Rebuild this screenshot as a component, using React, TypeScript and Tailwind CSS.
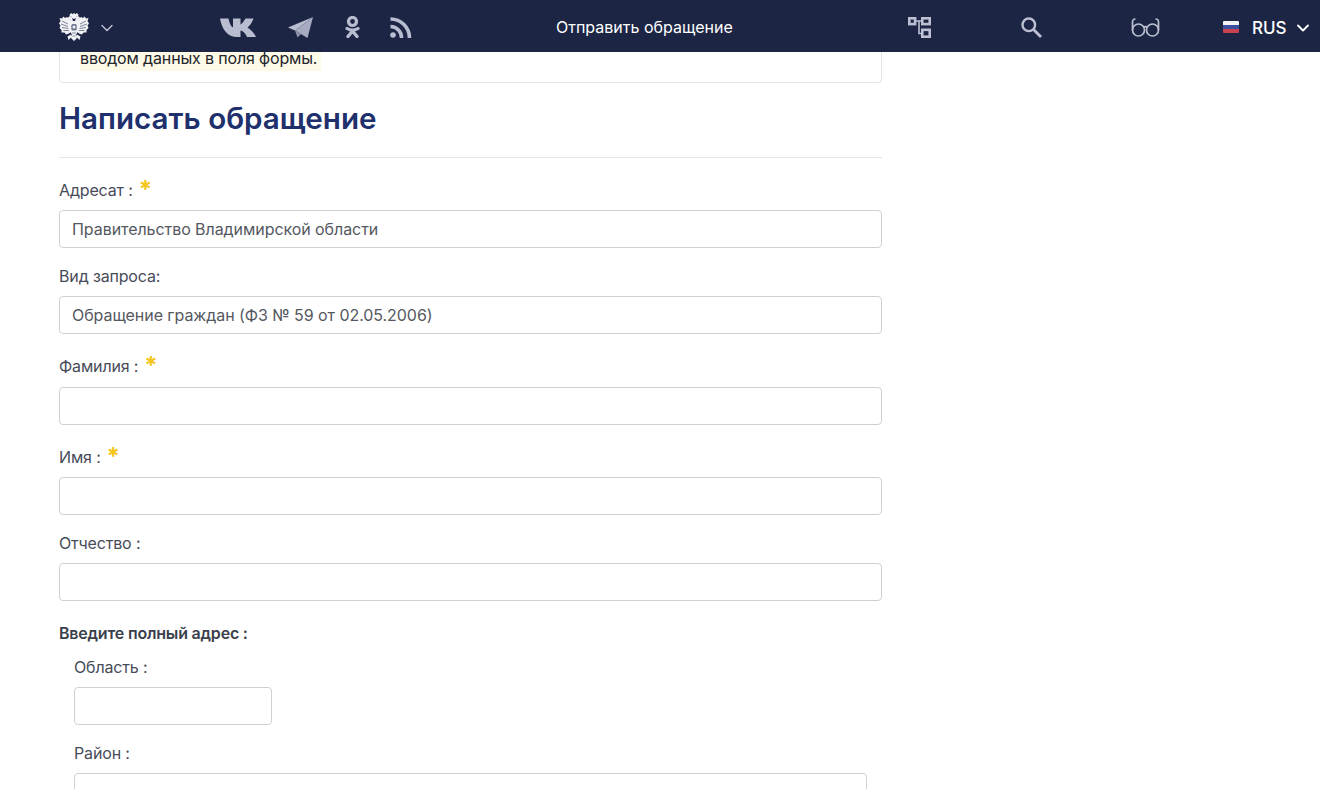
import React from 'react'
import { ChevronDown } from 'lucide-react'

const iconColor = '#b9bdd0'

const Wing = () => (
  <>
    <path d="M13 8 10.500 6 8 4 6 5 4.500 3.500 3 5.500 0.500 5 1.500 8 0 10.500 1.500 12.500 0.500 15 2.500 17 2.500 19.500 5.500 19.500 7 21.500 10 20.500 13 18z" />
    <path d="M3 8 9 11M2 11 9 13.500M3 14.500 9.500 15.500M4.500 17.500 10 17.500" stroke="#4c5370" strokeWidth="0.7" fill="none" />
    <path d="M12.500 3 10 3.500 9 5 7.500 5.500 9.500 6.500 11 6.500 13 9 14 8z" />
    <path d="M10.500 1.500 12.500 0 14 2 13.500 3.500 11 3.500z" />
    <path d="M8.500 23.500 12 21.500 13.500 24 11.500 25 9.500 27z" />
  </>
)

const Eagle = () => (
  <svg width="30" height="28" viewBox="0 0 30 28" fill="#f1f2f6">
    <Wing />
    <g transform="translate(30 0) scale(-1 1)">
      <Wing />
    </g>
    <path d="M13 1.500 15 0 17 1.500 17 5 15 6 13 5z" />
    <path d="M12 8h6l1 10-2 4 1 3-3 3-3-3 1-3-2-4z" />
    <rect x="12.300" y="11" width="5.400" height="6.500" rx="1.500" fill="#6f7690" />
    <circle cx="15" cy="14" r="1.500" fill="#f1f2f6" />
    <path d="M13 20h4M13.500 23h3" stroke="#5a6180" strokeWidth="0.7" />
  </svg>
)

const VkIcon = () => (
  <svg width="36" height="19" viewBox="0 0 36 19" fill={iconColor}>
    <path d="M0 0.500H8.500C9.500 5.500 11 8.500 13 9.500V0.500H20.500V6.500C22.500 5.500 24 3 25.500 0.500H33.500C32 5 29.500 8 27.500 9.500 30 11 33.500 14 36 19H27C25.500 15.500 23.500 13 20.500 12.500V19H17C8 19 2 12 0 0.500Z" />
  </svg>
)

const TelegramIcon = () => (
  <svg width="25" height="21" viewBox="0 0 25 21">
    <path d="M25 0 0 10.500 7 13.500z" fill={iconColor} />
    <path d="M25 0 7 13.500 19.500 21z" fill="#a6abc2" />
    <path d="M7 13.500 9.500 20.500 13 17z" fill="#8e94ae" />
  </svg>
)

const OkIcon = () => (
  <svg width="15" height="22" viewBox="0 0 15 22" fill="none" stroke={iconColor}>
    <circle cx="7.500" cy="5.500" r="4" strokeWidth="3.200" />
    <path d="M2 12.500c3.300 2 7.700 2 11 0" strokeWidth="3.200" strokeLinecap="round" />
    <path d="M7.500 15 3 20.500M7.500 15 12 20.500" strokeWidth="3.400" strokeLinecap="round" />
  </svg>
)

const RssIcon = () => (
  <svg width="22" height="21" viewBox="0 0 22 21" fill="none" stroke={iconColor} strokeWidth="3.600">
    <circle cx="3" cy="18" r="2.800" fill={iconColor} stroke="none" />
    <path d="M0.500 9.500A11 11 0 0 1 11.500 21" />
    <path d="M0.500 2A19 19 0 0 1 19.500 21" />
  </svg>
)

const SitemapIcon = () => (
  <svg width="23" height="21" viewBox="0 0 23 21" fill="none" stroke="#bcc0d2" strokeWidth="2.600">
    <rect x="1.300" y="1.300" width="5.800" height="5.800" />
    <rect x="14.300" y="1.300" width="7.400" height="5.800" />
    <rect x="14.300" y="12.800" width="7.400" height="6.900" />
    <path d="M7 4h8M11 4v12.500H15" strokeWidth="1.600" />
  </svg>
)

const SearchIcon = () => (
  <svg width="21" height="21" viewBox="0 0 21 21" fill="none" stroke="#bcc0d2">
    <circle cx="7.800" cy="7.800" r="6.300" strokeWidth="2.400" />
    <path d="M12.500 12.500 20 20" strokeWidth="2.800" />
  </svg>
)

const GlassesIcon = () => (
  <svg width="29" height="19" viewBox="0 0 29 19" fill="none" stroke="#bcc0d2" strokeWidth="1.700">
    <circle cx="7.500" cy="12" r="6" />
    <circle cx="21.500" cy="12" r="6" />
    <path d="M12.500 9.500c1.300-1 2.700-1 4 0" />
    <path d="M1.500 12V4c0-2 1-3 3-3M27.500 12V4c0-2-1-3-3-3" />
  </svg>
)

const Star = () => (
  <span className="ml-[6px] text-[#f5c518] text-[24px] font-bold leading-none h-[24px]">*</span>
)

const Label = ({ text, required, className = '' }: { text: string; required?: boolean; className?: string }) => (
  <div className={`flex items-end h-6 text-[16px] leading-6 tracking-[-0.15px] text-[#474c59] ${className}`}>
    <span>{text}</span>
    {required && <Star />}
  </div>
)

const Field = ({ value, className = 'w-full' }: { value?: string; className?: string }) => (
  <div className={`h-[38px] shrink-0 flex items-center px-3 border border-[#cfd0d4] rounded-[4px] bg-white text-[16px] tracking-[-0.06px] text-[#55585f] ${className}`}>
    {value}
  </div>
)

export default function App() {
  return (
    <div className="h-[789px] w-[1320px] overflow-hidden bg-white flex flex-col font-['Inter','Noto_Sans',sans-serif]">
      <header className="h-[52px] shrink-0 bg-[#1c2544] flex items-center relative z-10 text-white">
        <div className="ml-[59px] w-[30px] mt-[2px]"><Eagle /></div>
        <ChevronDown size={20} strokeWidth={1.6} className="ml-[8px] mt-[3px] text-[#c3c7d6]" />
        <div className="ml-[103px] mt-[3px]"><VkIcon /></div>
        <div className="ml-[32px] mt-[3px]"><TelegramIcon /></div>
        <div className="ml-[32px] mt-[2px]"><OkIcon /></div>
        <div className="ml-[30px] mt-[2px]"><RssIcon /></div>
        <span className="ml-[144px] w-[177px] pt-[2px] whitespace-nowrap text-[16px]">Отправить обращение</span>
        <div className="ml-[175px] mt-[3px]"><SitemapIcon /></div>
        <div className="ml-[90px] mt-[3px]"><SearchIcon /></div>
        <div className="ml-[89px] mt-[3px]"><GlassesIcon /></div>
        <div className="ml-[63px] mt-[2px] w-[16px] h-[12px] rounded-[1px] overflow-hidden flex flex-col">
          <div className="h-1 bg-[#f2f3f6]" />
          <div className="h-1 bg-[#3a4fa0]" />
          <div className="h-1 bg-[#c8414f]" />
        </div>
        <span className="ml-[13px] w-[35px] pt-[5px] text-[17px] font-medium">RUS</span>
        <ChevronDown size={20} strokeWidth={2.2} className="ml-[6px] mt-[3px]" />
      </header>

      <main className="w-[823px] ml-[59px] flex flex-col">
        <div className="h-[31px] border border-t-0 border-[#e4e4e6] rounded-b-[4px] pl-[20px]">
          <div className="w-fit bg-[#fdfae8] pr-1 h-[19px] leading-[13px] text-[16px] tracking-[-0.15px] text-[#22242a] whitespace-nowrap">вводом данных в поля формы.</div>
        </div>

        <h2 className="mt-[15px] h-[40px] leading-[40px] text-[29.6px] font-semibold text-[#20306c] whitespace-nowrap">Написать обращение</h2>
        <div className="mt-[19px] h-px bg-[#e6e6e8]" />

        <Label className="mt-[20px]" text="Адресат :" required />
        <div className="mt-[8px]"><Field value="Правительство Владимирской области" /></div>

        <Label className="mt-[16px]" text="Вид запроса:" />
        <div className="mt-[8px]"><Field value="Обращение граждан (ФЗ № 59 от 02.05.2006)" /></div>

        <Label className="mt-[20px]" text="Фамилия :" required />
        <div className="mt-[9px]"><Field /></div>

        <Label className="mt-[20px]" text="Имя :" required />
        <div className="mt-[8px]"><Field /></div>

        <Label className="mt-[16px]" text="Отчество :" />
        <div className="mt-[8px]"><Field /></div>

        <div className="mt-[20px] h-6 leading-6 text-[16px] tracking-[-0.2px] font-semibold text-[#3b3f4b] whitespace-nowrap">Введите полный адрес :</div>

        <div className="pl-[15px] flex flex-col">
          <Label className="mt-[10px]" text="Область :" />
          <div className="mt-[8px]"><Field className="w-[198px]" /></div>
          <Label className="mt-[16px]" text="Район :" />
          <div className="mt-[8px]"><Field className="w-[793px]" /></div>
        </div>
      </main>
    </div>
  )
}
